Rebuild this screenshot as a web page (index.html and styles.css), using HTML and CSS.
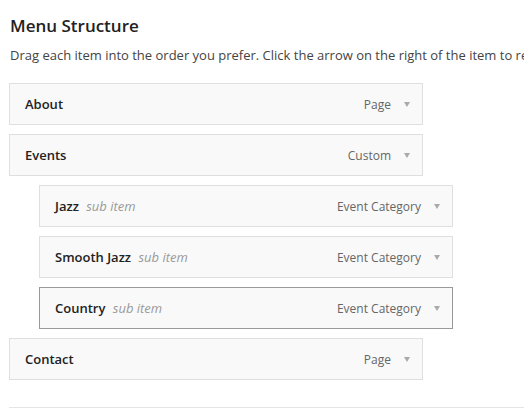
FILE: index.html
```html
<!DOCTYPE html>
<html lang="en">
<head>
  <meta charset="UTF-8">
  <title>Menu Structure</title>
  <link rel="stylesheet" href="styles.css">
</head>
<body>
<main class="menuEditor">
  <h3 class="menuTitle">Menu Structure</h3>
  <p class="menuHint">Drag each item into the order you prefer. Click the arrow on the right of the item to reveal additional configuration options.</p>

  <ul class="menuList">
    <li class="menuItem">
      <span class="itemTitle">About</span>
      <span class="itemControls"><span class="itemType">Page</span><span class="itemArrow"></span></span>
    </li>
    <li class="menuItem">
      <span class="itemTitle">Events</span>
      <span class="itemControls"><span class="itemType">Custom</span><span class="itemArrow"></span></span>
    </li>
    <li class="menuItem depth1">
      <span class="itemTitle">Jazz <em class="subLabel">sub item</em></span>
      <span class="itemControls"><span class="itemType">Event Category</span><span class="itemArrow"></span></span>
    </li>
    <li class="menuItem depth1">
      <span class="itemTitle">Smooth Jazz <em class="subLabel">sub item</em></span>
      <span class="itemControls"><span class="itemType">Event Category</span><span class="itemArrow"></span></span>
    </li>
    <li class="menuItem depth1 hover">
      <span class="itemTitle">Country <em class="subLabel">sub item</em></span>
      <span class="itemControls"><span class="itemType">Event Category</span><span class="itemArrow"></span></span>
    </li>
    <li class="menuItem">
      <span class="itemTitle">Contact</span>
      <span class="itemControls"><span class="itemType">Page</span><span class="itemArrow"></span></span>
    </li>
  </ul>

  <div class="menuFooter"></div>
</main>
</body>
</html>
```

FILE: styles.css
```css
:root {
  --textColor: #222;
  --mutedColor: #666;
  --subColor: #999;
  --borderColor: #dfdfdf;
  --itemBackground: #f9f9f9;
}
html, body {
  margin: 0;
  background: #fff;
  overflow: hidden;
}
body {
  font-family: "Open Sans", "Liberation Sans", sans-serif;
  color: var(--textColor);
}
.menuEditor {
  padding: 14px 0 0 9px;
}
.menuTitle {
  margin: 0 0 7px 1px;
  font-size: 17px;
  line-height: 24px;
  font-weight: 600;
}
.menuHint {
  margin: 0 0 0 1px;
  font-size: 13px;
  line-height: 20px;
  white-space: nowrap;
  color: #444;
}
.menuList {
  list-style: none;
  margin: 18px 0 0;
  padding: 0;
}
.menuItem {
  display: flex;
  align-items: center;
  justify-content: space-between;
  box-sizing: border-box;
  width: 414px;
  height: 42px;
  margin-top: 9px;
  padding: 0 12px 0 15px;
  border: 1px solid var(--borderColor);
  background: var(--itemBackground);
  font-size: 13px;
}
.menuList .menuItem:first-child {
  margin-top: 0;
}
.menuItem.depth1 {
  margin-left: 30px;
}
.menuItem.hover {
  border-color: #999;
}
.itemTitle {
  font-weight: 600;
}
.subLabel {
  font-weight: 400;
  color: var(--subColor);
  margin-left: 4px;
}
.itemControls {
  display: flex;
  align-items: center;
}
.itemType {
  color: var(--mutedColor);
  font-size: 12px;
}
.itemArrow {
  width: 0;
  height: 0;
  margin-left: 13px;
  border-left: 3px solid transparent;
  border-right: 3px solid transparent;
  border-top: 5px solid #aaa;
}
.menuFooter {
  margin-top: 27px;
  border-top: 1px solid #e5e5e5;
}
```
